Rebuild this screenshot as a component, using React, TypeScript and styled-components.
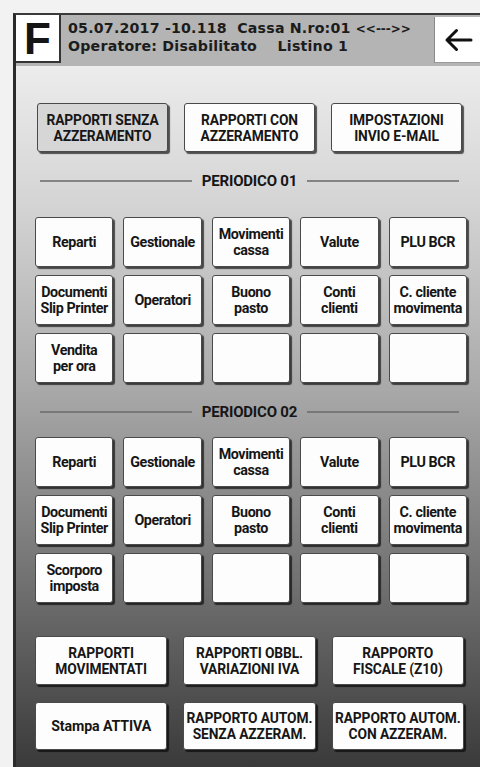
import React from 'react';
import styled, { createGlobalStyle } from 'styled-components';

const GlobalStyle = createGlobalStyle`
  html, body {
    margin: 0;
    padding: 0;
    background: #f2f2f2;
  }
  * {
    box-sizing: border-box;
  }
`;

const BTN_FONT = `Roboto, "Liberation Sans", sans-serif`;

type Cell = { label?: string[] };

const periodico: Cell[] = [
  { label: ['Reparti'] },
  { label: ['Gestionale'] },
  { label: ['Movimenti', 'cassa'] },
  { label: ['Valute'] },
  { label: ['PLU BCR'] },
  { label: ['Documenti', 'Slip Printer'] },
  { label: ['Operatori'] },
  { label: ['Buono', 'pasto'] },
  { label: ['Conti', 'clienti'] },
  { label: ['C. cliente', 'movimenta'] },
];

const topButtons = [
  { label: ['RAPPORTI SENZA', 'AZZERAMENTO'], active: true },
  { label: ['RAPPORTI CON', 'AZZERAMENTO'] },
  { label: ['IMPOSTAZIONI', 'INVIO E-MAIL'] },
];

const bottomButtons = [
  ['RAPPORTI', 'MOVIMENTATI'],
  ['RAPPORTI OBBL.', 'VARIAZIONI IVA'],
  ['RAPPORTO', 'FISCALE (Z10)'],
  ['Stampa ATTIVA'],
  ['RAPPORTO AUTOM.', 'SENZA AZZERAM.'],
  ['RAPPORTO AUTOM.', 'CON AZZERAM.'],
];

const Label = ({ lines }: { lines?: string[] }) => (
  <>
    {(lines || []).map((l, i) => (
      <span key={i}>{l}</span>
    ))}
  </>
);

const PeriodGrid = ({ last }: { last: string[] }) => (
  <Grid>
    {periodico.map((c, i) => (
      <KeyButton key={i}>
        <Label lines={c.label} />
      </KeyButton>
    ))}
    <KeyButton>
      <Label lines={last} />
    </KeyButton>
    {[0, 1, 2, 3].map((i) => (
      <KeyButton key={'e' + i} />
    ))}
  </Grid>
);

const App = () => {
  return (
    <Page>
      <GlobalStyle />
      <Frame>
        <Header>
          <FBox>F</FBox>
          <HeaderText>
            <HeaderLine>
              05.07.2017 -10.118&nbsp; Cassa N.ro:01 <Small>&lt;&lt;---&gt;&gt;</Small>
            </HeaderLine>
            <HeaderLine>
              Operatore: Disabilitato&nbsp;&nbsp;&nbsp; Listino 1
            </HeaderLine>
          </HeaderText>
          <BackBox>
            <svg width="30" height="26" viewBox="0 0 30 26">
              <path
                d="M28 13 H4 M13.5 3.5 L4 13 L13.5 22.5"
                fill="none"
                stroke="#111"
                strokeWidth="3"
                strokeLinecap="round"
                strokeLinejoin="round"
              />
            </svg>
          </BackBox>
        </Header>

        <Panel>
          <TopRow>
            {topButtons.map((b, i) => (
              <WideButton key={i} $active={b.active}>
                <Label lines={b.label} />
              </WideButton>
            ))}
          </TopRow>

          <Divider $top={20} $bottom={27}>
            <Line />
            <DividerTitle>PERIODICO 01</DividerTitle>
            <Line />
          </Divider>
          <PeriodGrid last={['Vendita', 'per ora']} />

          <Divider $top={20} $bottom={16}>
            <Line />
            <DividerTitle>PERIODICO 02</DividerTitle>
            <Line />
          </Divider>
          <PeriodGrid last={['Scorporo', 'imposta']} />

          <BottomRows>
            {bottomButtons.map((b, i) => (
              <WideButton key={i} $mixed={b[0] === 'Stampa ATTIVA'}>
                <Label lines={b} />
              </WideButton>
            ))}
          </BottomRows>
        </Panel>
      </Frame>
    </Page>
  );
};

const Page = styled.div`
  width: 480px;
  height: 767px;
  padding: 13px 0 0 13px;
  overflow: hidden;
  background: #f2f2f2;
`;

const Frame = styled.div`
  height: 100%;
  display: flex;
  flex-direction: column;
  border-left: 3px solid #2b2b2b;
  border-top: 2px solid #3a3a3a;
`;

const Header = styled.div`
  height: 51px;
  flex-shrink: 0;
  display: flex;
  align-items: flex-start;
  background: #b4b4b4;
`;

const FBox = styled.div`
  width: 45px;
  height: 48px;
  display: flex;
  align-items: center;
  justify-content: center;
  background: #fff;
  border-right: 2px solid #333;
  border-bottom: 2px solid #333;
  font-family: "Liberation Sans", Arial, sans-serif;
  font-weight: 700;
  font-size: 44px;
  line-height: 1;
  color: #151515;
  padding-top: 2px;
`;

const HeaderText = styled.div`
  flex: 1;
  padding: 5px 0 0 7px;
  font-family: "DejaVu Sans", Verdana, sans-serif;
  font-weight: 700;
  font-size: 14.2px;
  letter-spacing: 0.2px;
  color: #1c1c1c;
`;

const HeaderLine = styled.div`
  line-height: 17px;
  white-space: nowrap;
`;

const Small = styled.span`
  font-size: 12px;
  letter-spacing: 0;
`;

const BackBox = styled.div`
  width: 46px;
  height: 46px;
  margin-top: 2px;
  display: flex;
  align-items: center;
  justify-content: center;
  background: #fff;
  border-left: 1px solid #8a8a8a;
  border-bottom: 1px solid #9a9a9a;
`;

const Panel = styled.div`
  flex: 1;
  display: flex;
  flex-direction: column;
  padding: 37px 13px 0 19px;
  background: linear-gradient(
    to bottom,
    #ececec 0%,
    #d4d4d4 20%,
    #a9a9a9 46%,
    #6c6c6c 76%,
    #3a3a3a 100%
  );
`;

const ButtonBase = styled.div`
  min-width: 0;
  display: flex;
  flex-direction: column;
  align-items: center;
  justify-content: center;
  background: #fdfdfd;
  border: 1px solid #4a4a4a;
  border-radius: 3px;
  box-shadow: 2px 2px 1px rgba(0, 0, 0, 0.65);
  font-family: ${BTN_FONT};
  font-weight: 700;
  color: #161616;
  text-align: center;
  white-space: nowrap;
  span {
    display: block;
  }
`;

const TopRow = styled.div`
  display: grid;
  grid-template-columns: repeat(3, minmax(0, 1fr));
  column-gap: 16px;
  height: 49px;
  padding: 0 5px 0 2px;
`;

const WideButton = styled(ButtonBase)<{ $active?: boolean; $mixed?: boolean }>`
  background: ${(p) => (p.$active ? '#d6d6d6' : '#fdfdfd')};
  font-size: ${(p) => (p.$mixed ? '14.2px' : '13.8px')};
  line-height: 16px;
  letter-spacing: -0.1px;
`;

const Divider = styled.div<{ $top: number; $bottom: number }>`
  display: flex;
  align-items: center;
  gap: 10px;
  height: 18px;
  margin: ${(p) => p.$top}px 8px ${(p) => p.$bottom}px 5px;
`;

const Line = styled.div`
  flex: 1;
  height: 2px;
  background: #6e6e6e;
  opacity: 0.8;
`;

const DividerTitle = styled.div`
  font-family: ${BTN_FONT};
  font-weight: 700;
  font-size: 15px;
  letter-spacing: -0.2px;
  color: #161616;
`;

const Grid = styled.div`
  display: grid;
  grid-template-columns: repeat(5, minmax(0, 1fr));
  grid-auto-rows: 50px;
  gap: 8px 10px;
`;

const KeyButton = styled(ButtonBase)`
  font-size: 14.3px;
  line-height: 16px;
  letter-spacing: -0.4px;
`;

const BottomRows = styled.div`
  display: grid;
  grid-template-columns: repeat(3, minmax(0, 1fr));
  grid-template-rows: 49px 48px;
  gap: 17px 16px;
  margin-top: 33px;
  padding-right: 3px;
`;

export default App;
